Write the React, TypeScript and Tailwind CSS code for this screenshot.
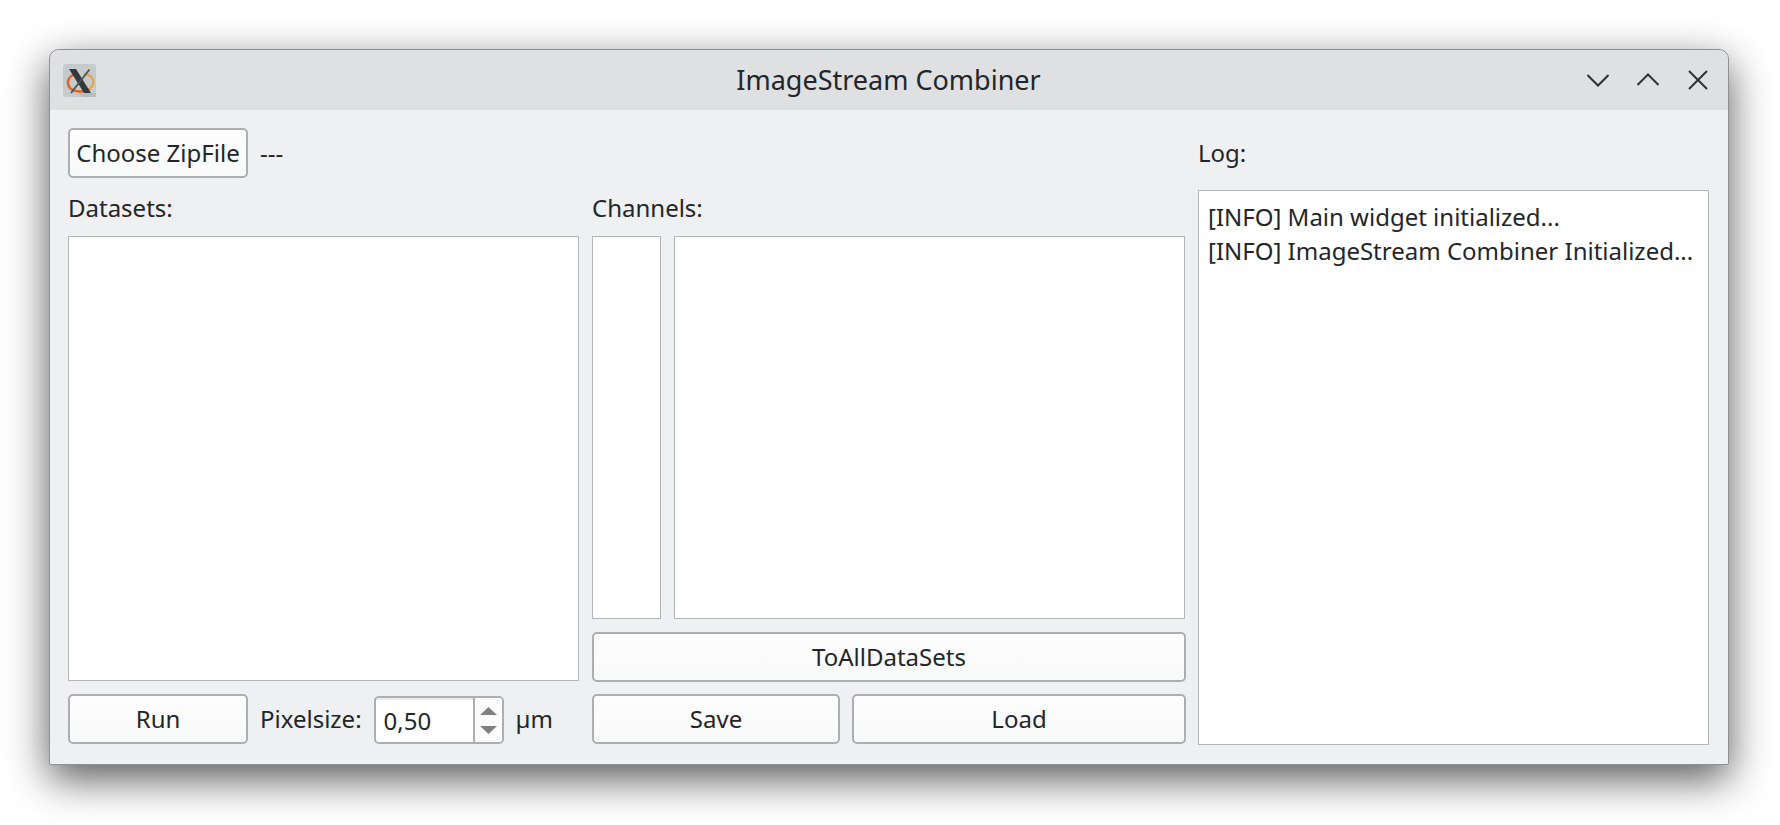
const PushButton = ({ label, className = "" }: { label: string; className?: string }) => {
  return (
    <button className={`h-[50px] flex items-center justify-center rounded-[5px] border-2 border-[#acaeb0] bg-gradient-to-b from-[#fdfdfd] to-[#f8f9f9] text-[#232629] ${className}`}>
      {label}
    </button>
  );
};

const ListBox = ({ className = "", children }: { className?: string; children?: React.ReactNode }) => {
  return <div className={`border border-[#b4b5b6] bg-white ${className}`}>{children}</div>;
};

const AppIcon = () => {
  return (
    <div className="w-[33px] h-[33px] rounded-[3px] bg-[#c4cacd] flex items-center justify-center">
      <svg width="33" height="33" viewBox="0 0 33 33">
        <path d="M15 29 L33 29 L33 33 L19 33 Z" fill="#b6bcbf" />
        <path d="M11 10.5 C 5 13, 3 19, 7 24 C 11 28, 21 29, 27 25" fill="none" stroke="#e2621b" strokeWidth="2.4" />
        <path d="M21 10 C 28 10.5, 31.5 15, 30 20 C 29.5 22, 28 24, 26 25.5" fill="none" stroke="#eea032" strokeWidth="1.8" />
        <path d="M6 5 H13 L28 29 H21 Z" fill="#34393c" />
        <path d="M26.5 5.5 L8 29" stroke="#4c5154" strokeWidth="1.8" />
      </svg>
    </div>
  );
};

const TitleBar = () => {
  return (
    <div className="h-[60px] shrink-0 bg-[#dee0e2] grid grid-cols-[1fr_auto_1fr] items-center pl-[13px] pr-[20px] rounded-t-[10px]">
      <AppIcon />
      <div className="ml-[6px] pb-[2px] text-[27px] text-[#232629]">ImageStream Combiner</div>
      <div className="flex items-center justify-end gap-[28px]">
        <svg width="22" height="22" viewBox="0 0 22 22" fill="none" stroke="#2f3235" strokeWidth="2">
          <path d="M0.5 6 L11 16.5 L21.5 6" />
        </svg>
        <svg width="22" height="22" viewBox="0 0 22 22" fill="none" stroke="#2f3235" strokeWidth="2">
          <path d="M0.5 16 L11 5.5 L21.5 16" />
        </svg>
        <svg className="ml-[1px]" width="20" height="20" viewBox="0 0 20 20" fill="none" stroke="#2f3235" strokeWidth="2">
          <path d="M1 1 L19 19 M19 1 L1 19" />
        </svg>
      </div>
    </div>
  );
};

const SpinBox = () => {
  return (
    <div className="w-[130px] h-[48px] flex rounded-[5px] border-2 border-[#acaeb0] bg-white overflow-hidden">
      <div className="flex-1 flex items-center pl-[8px] border-t-2 border-[#eceded]">0,50</div>
      <div className="w-[29px] border-l-2 border-[#acaeb0] bg-[#fbfbfb] flex flex-col items-center justify-center gap-[11px]">
        <svg width="17" height="8" viewBox="0 0 17 8">
          <path d="M8.5 0 L17 8 H0 Z" fill="#7e8082" />
        </svg>
        <svg width="17" height="8" viewBox="0 0 17 8">
          <path d="M0 0 H17 L8.5 8 Z" fill="#7e8082" />
        </svg>
      </div>
    </div>
  );
};

export default function App() {
  return (
    <div className="w-screen h-screen overflow-hidden bg-white pl-[49px] pt-[49px] font-['Noto_Sans',sans-serif] text-[24px] leading-none text-[#232629]">
      <div className="w-[1680px] h-[716px] flex flex-col rounded-t-[10px] rounded-b-[2px] border border-[#8d8f90] bg-[#eff0f1] shadow-[0_14px_42px_rgba(0,0,0,0.66)]">
        <TitleBar />
        <div className="grid grid-cols-[511px_593px_511px] gap-x-[13px] pl-[18px] pt-[18px]">
          <div className="flex flex-col">
            <div className="flex items-center gap-[12px]">
              <PushButton label="Choose ZipFile" className="w-[180px]" />
              <span>---</span>
            </div>
            <div className="h-[58px] flex items-center pt-[1px]">Datasets:</div>
            <ListBox className="h-[445px]" />
            <div className="mt-[13px] flex items-start">
              <PushButton label="Run" className="w-[180px]" />
              <span className="ml-[12px] h-[50px] flex items-center">Pixelsize:</span>
              <div className="ml-[12px] pt-[2px]">
                <SpinBox />
              </div>
              <span className="ml-[12px] h-[50px] flex items-center">µm</span>
            </div>
          </div>
          <div className="flex flex-col pt-[50px]">
            <div className="h-[58px] flex items-center pt-[1px]">Channels:</div>
            <div className="h-[383px] flex gap-[13px]">
              <ListBox className="w-[69px]" />
              <ListBox className="flex-1" />
            </div>
            <PushButton label="ToAllDataSets" className="mt-[13px] w-[594px]" />
            <div className="mt-[12px] flex gap-[12px] w-[594px]">
              <PushButton label="Save" className="w-[248px]" />
              <PushButton label="Load" className="flex-1" />
            </div>
          </div>
          <div className="flex flex-col">
            <div className="h-[50px] flex items-center">Log:</div>
            <ListBox className="mt-[12px] h-[555px] px-[9px] pt-[9px] leading-[34px]">
              <div>[INFO] Main widget initialized...</div>
              <div>[INFO] ImageStream Combiner Initialized...</div>
            </ListBox>
          </div>
        </div>
      </div>
    </div>
  );
}
